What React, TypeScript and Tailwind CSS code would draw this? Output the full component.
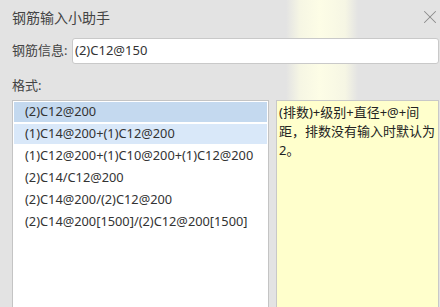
import { X } from "lucide-react"

const formats = [
  "(2)C12@200",
  "(1)C14@200+(1)C12@200",
  "(1)C12@200+(1)C10@200+(1)C12@200",
  "(2)C14/C12@200",
  "(2)C14@200/(2)C12@200",
  "(2)C14@200[1500]/(2)C12@200[1500]",
]

export default function App() {
  return (
    <div
      className="w-[440px] h-[307px] overflow-hidden flex flex-col bg-[#e3e3e3] bg-[linear-gradient(90deg,#e3e3e3_286px,#f6f6e4_300px,#fdfde6_320px,#f6f6e4_345px,#e3e3e3_358px)] text-[#333] font-['Noto_Sans','Noto_Sans_CJK_SC',sans-serif]"
    >
      {/* title bar */}
      <div className="h-[34px] flex items-center justify-between pl-3 pr-[-1px] shrink-0">
        <span className="text-[14px] text-[#444]">钢筋输入小助手</span>
        <X className="w-[22px] h-[22px] text-[#8a8a8a] mr-[-1px]" strokeWidth={1.1} />
      </div>

      {/* input row */}
      <div className="flex items-center pl-3 mt-[4px] shrink-0">
        <label className="w-[60px] text-[13px] text-[#444]">钢筋信息:</label>
        <div className="flex-1 h-[26px] bg-white border border-[#c9c9c9] rounded-[3px] flex items-center px-[2px] text-[13px] mr-px">
          (2)C12@150
        </div>
      </div>

      <div className="pl-3 mt-[12px] text-[13px] text-[#444] shrink-0">格式:</div>

      {/* panels */}
      <div className="flex gap-[7px] pl-3 pr-px mt-[4px] flex-1 min-h-0">
        <div className="w-[257px] bg-white border border-[#c4c4c4] border-b-0 pt-px px-px flex flex-col gap-[2px]">
          {formats.map((f, i) => (
            <div
              key={f}
              className={
                "h-[20px] flex items-center pl-[11px] text-[12.8px] " +
                (i === 0 ? "bg-[#c4d9ef]" : i === 1 ? "bg-[#d9e8f9]" : "")
              }
            >
              {f}
            </div>
          ))}
        </div>
        <div className="flex-1 bg-[#ffffcc] border border-[#c8c8c8] border-b-0 pl-[2px] pt-[2px] text-[13px] leading-[19px] text-[#222]">
          (排数)+级别+直径+@+间距，排数没有输入时默认为2。
        </div>
      </div>
    </div>
  )
}
